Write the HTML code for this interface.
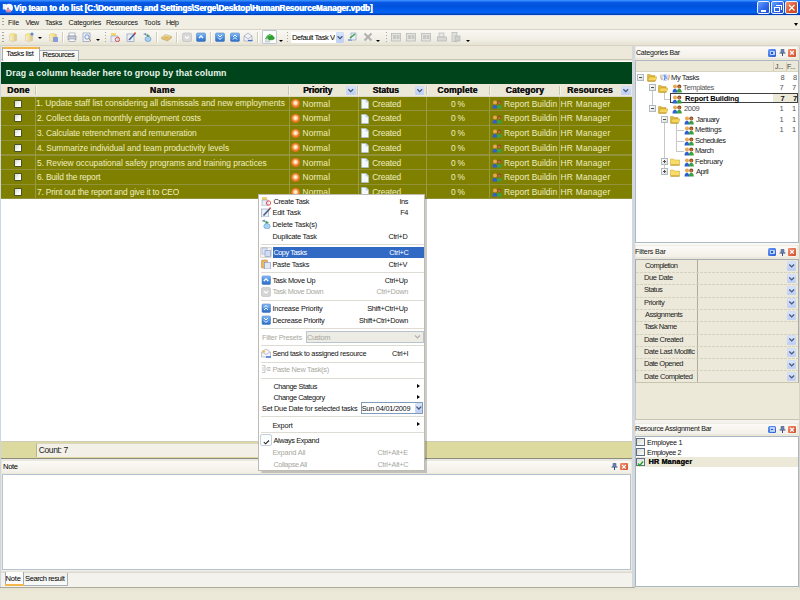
<!DOCTYPE html><html><head><meta charset="utf-8"><style>
*{margin:0;padding:0;box-sizing:border-box}
html,body{width:800px;height:600px;overflow:hidden;background:#ECE9D8;font-family:"Liberation Sans",sans-serif;font-size:8px;color:#000;position:relative}
div{position:absolute}
.nw{white-space:nowrap}
.grip{width:2px;background:repeating-linear-gradient(#A9A696 0 1px,transparent 1px 3px)}
.tsep{width:1px;background:#D0CDBD;box-shadow:1px 0 0 #fff}
.dsep{width:1px;background:repeating-linear-gradient(#A9A696 0 1px,transparent 1px 3px)}
.arr{width:0;height:0;border-left:2px solid transparent;border-right:2px solid transparent;border-top:2px solid #000}
.ddb{background:linear-gradient(#DDE7FB,#B9CCF2);border-radius:1.5px;box-shadow:inset 0 0 0 0.6px #C8D6F4}
.ddb svg{position:absolute;left:0;top:0}
</style></head><body>
<div style="left:0px;top:0px;width:800px;height:15px;background:linear-gradient(#3E96FF 0,#2C80FA 1px,#0858E4 2.5px,#0052DC 6px,#005CEC 10px,#0062F4 12.5px,#0048C4 14px,#0038A0 15px)"></div>
<div style="left:0px;top:15px;width:800px;height:1px;background:#D8E2F4"></div>
<div style="left:1.5px;top:2px;width:12px;height:12px"><svg width="12" height="12" viewBox="0 0 12 12"><rect x="0.8" y="2" width="3.2" height="5.5" fill="#E8F0FF"/><circle cx="7" cy="5.8" r="4" fill="#FCF8FA"/><path d="M3.5 8 Q6.5 6.5 9.5 8.5 L8.5 10.5 L4 10.5 Z" fill="#E07890" opacity="0.8"/><circle cx="6" cy="6.5" r="1" fill="#8888A8"/></svg></div>
<div class="nw" style="left:13.75px;top:2.86px;font-size:8.2px;line-height:11px;font-weight:bold;color:#fff;letter-spacing:-0.096px;text-shadow:0.5px 0 0 #fff;">Vip team to do list [C:\Documents and Settings\Serge\Desktop\HumanResourceManager.vpdb]</div>
<div style="left:757px;top:1px;width:13px;height:13px;border:1px solid #EEF2FF;border-radius:2px;background:linear-gradient(135deg,#6AA0FC,#3068EA 55%,#2050D0)"><div style="left:2.5px;top:7.5px;width:5px;height:2px;background:#fff"></div></div>
<div style="left:771px;top:1px;width:13px;height:13px;border:1px solid #EEF2FF;border-radius:2px;background:linear-gradient(135deg,#6AA0FC,#3068EA 55%,#2050D0)"><div style="left:2px;top:5px;width:6px;height:5px;border:1px solid #fff;border-top-width:1.5px"></div><div style="left:4px;top:2.5px;width:6px;height:5px;border-top:1.5px solid #fff;border-right:1px solid #fff"></div></div>
<div style="left:785px;top:1px;width:13px;height:13px;border:1px solid #EEF2FF;border-radius:2px;background:linear-gradient(135deg,#F49878,#DC5830 55%,#C4421E)"><svg style="position:absolute;left:1px;top:1px" width="9" height="9" viewBox="0 0 9 9"><path d="M2 2 L7.5 7.5 M7.5 2 L2 7.5" stroke="#fff" stroke-width="1.2"/></svg></div>
<div style="left:0px;top:16px;width:800px;height:12.5px;background:#F1EFE4"></div>
<div style="left:0px;top:28.5px;width:800px;height:1px;background:#D8D5C6"></div>
<div class="grip" style="left:2px;top:18px;height:9px"></div>
<div class="nw" style="left:8.00px;top:17.54px;font-size:7.1px;line-height:10px;font-weight:normal;color:#111;letter-spacing:-0.083px;">File</div>
<div class="nw" style="left:25.60px;top:17.54px;font-size:7.1px;line-height:10px;font-weight:normal;color:#111;letter-spacing:-0.533px;">View</div>
<div class="nw" style="left:45.00px;top:17.54px;font-size:7.1px;line-height:10px;font-weight:normal;color:#111;letter-spacing:-0.225px;">Tasks</div>
<div class="nw" style="left:68.50px;top:17.54px;font-size:7.1px;line-height:10px;font-weight:normal;color:#111;letter-spacing:-0.167px;">Categories</div>
<div class="nw" style="left:105.90px;top:17.54px;font-size:7.1px;line-height:10px;font-weight:normal;color:#111;letter-spacing:-0.225px;">Resources</div>
<div class="nw" style="left:144.00px;top:17.54px;font-size:7.1px;line-height:10px;font-weight:normal;color:#111;">Tools</div>
<div class="nw" style="left:165.90px;top:17.54px;font-size:7.1px;line-height:10px;font-weight:normal;color:#111;letter-spacing:-0.500px;">Help</div>
<div class="arr" style="left:793.5px;top:23px;border-width:3px 2.5px 0 2.5px"></div>
<div style="left:0px;top:29.5px;width:800px;height:15px;background:linear-gradient(#F8F7F2,#F1EFE6 60%,#E6E3D3)"></div>
<div style="left:0px;top:44.5px;width:800px;height:2px;background:linear-gradient(#D8D5C8,#CFCCC0)"></div>
<div class="grip" style="left:2px;top:32px;height:11px"></div>
<div style="left:8px;top:32px;width:10px;height:10px"><svg width="10" height="10" viewBox="0 0 10 10"><defs><linearGradient id="cg" x1="0" x2="1"><stop offset="0" stop-color="#F8F0D0"/><stop offset="0.5" stop-color="#F0E0A8"/><stop offset="1" stop-color="#D8C488"/></linearGradient></defs><path d="M1.5 2.5 Q5 0.5 8.5 2.5 L8.5 8.5 Q5 10.5 1.5 8.5 Z" fill="url(#cg)" stroke="#D0C090" stroke-width="0.5"/><ellipse cx="4" cy="2.8" rx="2.2" ry="1.3" fill="#F8E878"/></svg></div>
<div style="left:24px;top:32px;width:10px;height:10px"><svg width="10" height="10" viewBox="0 0 10 10"><defs><linearGradient id="cg" x1="0" x2="1"><stop offset="0" stop-color="#F8F0D0"/><stop offset="0.5" stop-color="#F0E0A8"/><stop offset="1" stop-color="#D8C488"/></linearGradient></defs><path d="M1.5 2.5 Q5 0.5 8.5 2.5 L8.5 8.5 Q5 10.5 1.5 8.5 Z" fill="url(#cg)" stroke="#D0C090" stroke-width="0.5"/><ellipse cx="4" cy="2.8" rx="2.2" ry="1.3" fill="#F8E878"/><circle cx="8" cy="2" r="1.6" fill="#5A8AD0"/></svg></div>
<div class="arr" style="left:38px;top:37px"></div>
<div style="left:48px;top:32px;width:10px;height:10px"><svg width="10" height="10" viewBox="0 0 10 10"><defs><linearGradient id="cg" x1="0" x2="1"><stop offset="0" stop-color="#F8F0D0"/><stop offset="0.5" stop-color="#F0E0A8"/><stop offset="1" stop-color="#D8C488"/></linearGradient></defs><path d="M1.5 2.5 Q5 0.5 8.5 2.5 L8.5 8.5 Q5 10.5 1.5 8.5 Z" fill="url(#cg)" stroke="#D0C090" stroke-width="0.5"/><ellipse cx="4" cy="2.8" rx="2.2" ry="1.3" fill="#F8E878"/><rect x="5" y="5" width="5" height="5" fill="#8A9CDC"/></svg></div>
<div class="tsep" style="left:62px;top:32px;height:11px"></div>
<div style="left:67px;top:32px;width:10px;height:10px"><svg width="10" height="10" viewBox="0 0 10 10"><rect x="2" y="1" width="6" height="3" fill="#fff" stroke="#8890A0" stroke-width="0.6"/><rect x="1" y="4" width="8" height="3.5" fill="#C8CCD8" stroke="#7880A0" stroke-width="0.6"/><rect x="2" y="7" width="6" height="2.5" fill="#fff" stroke="#8890A0" stroke-width="0.6"/></svg></div>
<div style="left:82px;top:32px;width:10px;height:10px"><svg width="10" height="10" viewBox="0 0 10 10"><rect x="1" y="1" width="7" height="8.5" fill="#F0F4FA" stroke="#8898B8" stroke-width="0.7"/><circle cx="5" cy="5" r="2.2" fill="none" stroke="#6080C0" stroke-width="0.8"/><path d="M6.5 6.5 L9 9" stroke="#C08040"/></svg></div>
<div class="arr" style="left:96px;top:39px"></div>
<div class="dsep" style="left:105px;top:32px;height:11px"></div>
<div style="left:110px;top:32px;width:10px;height:10px"><svg width="10" height="10" viewBox="0 0 10 10"><rect x="1" y="1" width="5" height="4" fill="#F4D870"/><rect x="1" y="4" width="7" height="6" fill="#E8ECF4" stroke="#90A0C0" stroke-width="0.6"/><circle cx="7.5" cy="7.5" r="2.2" fill="none" stroke="#E04040" stroke-width="0.9"/></svg></div>
<div style="left:126px;top:32px;width:10px;height:10px"><svg width="10" height="10" viewBox="0 0 10 10"><rect x="1" y="2" width="7" height="7.5" fill="#E8F0FA" stroke="#8090B0" stroke-width="0.6"/><path d="M3 8 L9 1.5" stroke="#506090" stroke-width="1.6"/><circle cx="9" cy="1.3" r="1" fill="#E05030"/></svg></div>
<div style="left:142px;top:32px;width:10px;height:10px"><svg width="10" height="10" viewBox="0 0 10 10"><path d="M1 2 L4 1 L5 4 Z" fill="#6A90C8"/><path d="M5 2 L8 4 L5 6 Z" fill="#40A040"/><ellipse cx="6" cy="7" rx="3" ry="2.6" fill="#A8D0F0" stroke="#6090C0" stroke-width="0.6"/></svg></div>
<div class="tsep" style="left:155.5px;top:32px;height:11px"></div>
<div style="left:160.5px;top:32px;width:11px;height:10px"><svg width="11" height="10" viewBox="0 0 11 10"><path d="M0.5 5.5 L4.5 2.5 L10.5 4.5 L6.5 7.5 Z" fill="#F0DC98" stroke="#B8A060" stroke-width="0.5"/><path d="M0.5 5.5 L0.8 7 L6.5 9 L10.5 6 L10.5 4.5" fill="#E0C070" stroke="#B8A060" stroke-width="0.5"/><path d="M3 4.5 L7 5.5" stroke="#C8A850" stroke-width="0.6"/></svg></div>
<div class="tsep" style="left:176px;top:32px;height:11px"></div>
<div style="left:182px;top:32px;width:10px;height:10px"><svg width="10" height="10" viewBox="0 0 10 10"><rect x="0.5" y="1" width="9" height="8.5" rx="1.5" fill="#D8D8D8" stroke="#B8B8B8" stroke-width="0.6"/><path d="M3 4.5 L5 6.5 L7 4.5" fill="none" stroke="#fff" stroke-width="1.2"/></svg></div>
<div style="left:196px;top:32px;width:10px;height:10px"><svg width="10" height="10" viewBox="0 0 10 10"><rect x="0.5" y="1" width="9" height="8.5" rx="1.3" fill="url(#bg1)" stroke="#3A70B8" stroke-width="0.5"/><path d="M3 6 L5 4 L7 6" fill="none" stroke="#fff" stroke-width="1.3"/></svg></div>
<div class="tsep" style="left:209.5px;top:32px;height:11px"></div>
<div style="left:215px;top:32px;width:10px;height:10px"><svg width="10" height="10" viewBox="0 0 10 10"><rect x="0.5" y="1" width="9" height="8.5" rx="1.3" fill="url(#bg1)" stroke="#3A70B8" stroke-width="0.5"/><path d="M3 3 L5 5 L7 3 M3 5.5 L5 7.5 L7 5.5" fill="none" stroke="#fff" stroke-width="1"/></svg></div>
<div style="left:230px;top:32px;width:10px;height:10px"><svg width="10" height="10" viewBox="0 0 10 10"><rect x="0.5" y="1" width="9" height="8.5" rx="1.3" fill="url(#bg1)" stroke="#3A70B8" stroke-width="0.5"/><path d="M3 5 L5 3 L7 5 M3 7.5 L5 5.5 L7 7.5" fill="none" stroke="#fff" stroke-width="1"/></svg></div>
<div style="left:243px;top:32px;width:10px;height:10px"><svg width="10" height="10" viewBox="0 0 10 10"><path d="M1 4 L5 1 L9 4 L9 9 L1 9 Z" fill="#F0F0F4" stroke="#9098B0" stroke-width="0.6"/><path d="M1 4 L5 7 L9 4" fill="none" stroke="#9098B0" stroke-width="0.6"/><path d="M5 8.5 L9.5 8.5" stroke="#4070D0" stroke-width="1.2"/></svg></div>
<div class="tsep" style="left:257px;top:32px;height:11px"></div>
<div style="left:261.5px;top:30.3px;width:15px;height:14px;background:#FCFCFA;border:1px solid #C0C8D4;border-radius:1px"></div>
<div style="left:263.5px;top:32.5px;width:11px;height:10px"><svg width="11" height="10" viewBox="0 0 11 10"><path d="M1.5 6 Q3 1.5 6 1.5 Q9 2 10.5 5 L9.5 6.5 L5 7 Z" fill="#2EA030" stroke="#208028" stroke-width="0.5"/><path d="M3 3.5 Q5 2 7 2.5" stroke="#60D060" stroke-width="1" fill="none"/><path d="M1 9 L3 4.5 L6 9 Z" fill="#D8E4E8" stroke="#90A8A0" stroke-width="0.4"/></svg></div>
<div class="arr" style="left:279px;top:40px"></div>
<div class="dsep" style="left:287px;top:32px;height:11px"></div>
<div style="left:291px;top:31.5px;width:53px;height:11px;background:#fff"></div>
<div style="left:291px;top:31.5px;width:44px;height:11px;overflow:hidden">
<div class="nw" style="left:1.00px;top:0.57px;font-size:7.6px;line-height:11px;font-weight:normal;color:#000;letter-spacing:-0.442px;">Default Task View</div>
</div>
<div class="ddb" style="left:335.5px;top:31.5px;width:8px;height:11px"><svg width="8" height="11" viewBox="0 0 8 11"><path d="M1.60 4.30 L4.00 6.70 L6.40 4.30" fill="none" stroke="#4A5880" stroke-width="1.3"/></svg></div>
<div style="left:347px;top:32px;width:10px;height:10px"><svg width="10" height="10" viewBox="0 0 10 10"><path d="M1 8 L5 8" stroke="#5080D0" stroke-width="1.2"/><rect x="4" y="1" width="5" height="7" fill="#E8F0F8" stroke="#8098B8" stroke-width="0.6"/><path d="M3 6 L8 2" stroke="#40A040" stroke-width="1.4"/></svg></div>
<div style="left:363px;top:32px;width:10px;height:10px"><svg width="10" height="10" viewBox="0 0 10 10"><path d="M1.5 1.5 L8.5 8.5 M8.5 1.5 L1.5 8.5" stroke="#B0B0B0" stroke-width="2"/></svg></div>
<div class="arr" style="left:376px;top:40px"></div>
<div class="dsep" style="left:386px;top:32px;height:11px"></div>
<div style="left:391px;top:32px;width:10px;height:10px"><svg width="10" height="10" viewBox="0 0 10 10"><rect x="0.5" y="1.5" width="9" height="7.5" fill="#E4E4E0" stroke="#B4B4B0" stroke-width="0.7"/><rect x="2" y="3" width="3" height="4" fill="#C8C8C4"/><rect x="5.5" y="3" width="3" height="4" fill="#C8C8C4"/></svg></div>
<div style="left:406px;top:32px;width:10px;height:10px"><svg width="10" height="10" viewBox="0 0 10 10"><rect x="0.5" y="1.5" width="9" height="7.5" fill="#E4E4E0" stroke="#B4B4B0" stroke-width="0.7"/><rect x="2" y="3" width="3" height="4" fill="#C8C8C4"/><rect x="5.5" y="3" width="3" height="4" fill="#C8C8C4"/></svg></div>
<div style="left:421px;top:32px;width:10px;height:10px"><svg width="10" height="10" viewBox="0 0 10 10"><rect x="0.5" y="1.5" width="9" height="7.5" fill="#E4E4E0" stroke="#B4B4B0" stroke-width="0.7"/><rect x="2" y="3" width="3" height="4" fill="#C8C8C4"/><rect x="5.5" y="3" width="3" height="4" fill="#C8C8C4"/></svg></div>
<div style="left:437px;top:32px;width:10px;height:10px"><svg width="10" height="10" viewBox="0 0 10 10"><rect x="2" y="1" width="5" height="4" fill="#E8E8E4" stroke="#B0B0AC" stroke-width="0.6"/><rect x="0.5" y="5" width="9" height="4" fill="#D8D8D4" stroke="#B0B0AC" stroke-width="0.6"/></svg></div>
<div style="left:451px;top:32px;width:10px;height:10px"><svg width="10" height="10" viewBox="0 0 10 10"><rect x="1" y="0.5" width="5" height="9" fill="#E0E0DC" stroke="#B0B0AC" stroke-width="0.6"/><rect x="4" y="4" width="5" height="5" fill="#D0D0CC" stroke="#B0B0AC" stroke-width="0.6"/></svg></div>
<div class="arr" style="left:466px;top:40px"></div>
<div style="left:0px;top:45.5px;width:632px;height:542px;background:#ECE9D8"></div>
<div style="left:0px;top:45.5px;width:1.3px;height:542px;background:#CDD5DE"></div>
<div style="left:1.3px;top:46.5px;width:630.7px;height:14px;background:#ECE9DA"></div>
<div style="left:1.3px;top:59.3px;width:630.7px;height:1px;background:#C8C5B6"></div>
<div style="left:2px;top:47px;width:37.5px;height:14px;background:#FDFDFB;border:1px solid #A0AAB8;border-bottom:none"></div>
<div style="left:2.5px;top:47px;width:36.5px;height:2px;background:#F3B64C"></div>
<div class="nw" style="left:6.20px;top:47.87px;font-size:7.6px;line-height:11px;font-weight:normal;color:#000;letter-spacing:-0.356px;">Tasks list</div>
<div style="left:39.5px;top:49.5px;width:39px;height:11.5px;background:linear-gradient(#FBFBF8,#EDEBE3);border:1px solid #A8B0BC;border-bottom:none;border-left:none"></div>
<div class="nw" style="left:42.50px;top:48.87px;font-size:7.6px;line-height:11px;font-weight:normal;color:#000;letter-spacing:-0.500px;">Resources</div>
<div style="left:1.3px;top:60.5px;width:630.7px;height:1px;background:#FFFFFF"></div>
<div style="left:632px;top:45.5px;width:2.5px;height:542px;background:#D3D8DD"></div>
<div style="left:1.3px;top:61.5px;width:630.7px;height:22.5px;background:#00441C"></div>
<div class="nw" style="left:5.80px;top:66.95px;font-size:8.8px;line-height:12px;font-weight:bold;color:#EAF4EA;letter-spacing:0.085px;">Drag a column header here to group by that column</div>
<div style="left:1.3px;top:84px;width:630.7px;height:12.5px;background:#EBE8D8"></div>
<div style="left:1.3px;top:95.5px;width:630.7px;height:1px;background:#DCD8C6"></div>
<div class="nw" style="left:7.10px;top:84.02px;font-size:8.6px;line-height:12px;font-weight:bold;color:#111;letter-spacing:0.267px;text-shadow:0.4px 0 0 #111;">Done</div>
<div class="nw" style="left:149.75px;top:84.02px;font-size:8.6px;line-height:12px;font-weight:bold;color:#111;letter-spacing:0.450px;text-shadow:0.4px 0 0 #111;">Name</div>
<div class="nw" style="left:303.00px;top:84.02px;font-size:8.6px;line-height:12px;font-weight:bold;color:#111;letter-spacing:-0.129px;text-shadow:0.4px 0 0 #111;">Priority</div>
<div class="nw" style="left:372.50px;top:84.02px;font-size:8.6px;line-height:12px;font-weight:bold;color:#111;letter-spacing:0.020px;text-shadow:0.4px 0 0 #111;">Status</div>
<div class="nw" style="left:437.20px;top:84.02px;font-size:8.6px;line-height:12px;font-weight:bold;color:#111;letter-spacing:0.143px;text-shadow:0.4px 0 0 #111;">Complete</div>
<div class="nw" style="left:505.60px;top:84.02px;font-size:8.6px;line-height:12px;font-weight:bold;color:#111;letter-spacing:0.143px;text-shadow:0.4px 0 0 #111;">Category</div>
<div class="nw" style="left:567.00px;top:84.02px;font-size:8.6px;line-height:12px;font-weight:bold;color:#111;letter-spacing:0.200px;text-shadow:0.4px 0 0 #111;">Resources</div>
<div style="left:35px;top:85.5px;width:1px;height:9.5px;background:#CBC7B6;box-shadow:1px 0 0 rgba(255,255,255,0.5)"></div>
<div style="left:288px;top:85.5px;width:1px;height:9.5px;background:#CBC7B6;box-shadow:1px 0 0 rgba(255,255,255,0.5)"></div>
<div style="left:357px;top:85.5px;width:1px;height:9.5px;background:#CBC7B6;box-shadow:1px 0 0 rgba(255,255,255,0.5)"></div>
<div style="left:425.5px;top:85.5px;width:1px;height:9.5px;background:#CBC7B6;box-shadow:1px 0 0 rgba(255,255,255,0.5)"></div>
<div style="left:489px;top:85.5px;width:1px;height:9.5px;background:#CBC7B6;box-shadow:1px 0 0 rgba(255,255,255,0.5)"></div>
<div style="left:559px;top:85.5px;width:1px;height:9.5px;background:#CBC7B6;box-shadow:1px 0 0 rgba(255,255,255,0.5)"></div>
<div class="ddb" style="left:346px;top:85.5px;width:9.5px;height:9px"><svg width="9.5" height="9" viewBox="0 0 9.5 9"><path d="M2.35 3.30 L4.75 5.70 L7.15 3.30" fill="none" stroke="#4A5880" stroke-width="1.3"/></svg></div>
<div class="ddb" style="left:414.5px;top:85.5px;width:9.5px;height:9px"><svg width="9.5" height="9" viewBox="0 0 9.5 9"><path d="M2.35 3.30 L4.75 5.70 L7.15 3.30" fill="none" stroke="#4A5880" stroke-width="1.3"/></svg></div>
<div class="ddb" style="left:621px;top:85.5px;width:9.5px;height:9px"><svg width="9.5" height="9" viewBox="0 0 9.5 9"><path d="M2.35 3.30 L4.75 5.70 L7.15 3.30" fill="none" stroke="#4A5880" stroke-width="1.3"/></svg></div>
<div style="left:1.3px;top:96.5px;width:630.7px;height:102.89999999999999px;background:#808000"></div>
<div style="left:1.3px;top:110.10000000000001px;width:630.7px;height:1.4px;background:#92923A"></div>
<div style="left:14px;top:99.7px;width:8px;height:8px;background:linear-gradient(135deg,#D8D8D0,#FCFCFA 70%);border:1px solid #4A5228;border-radius:1px"></div>
<div class="nw" style="left:36.00px;top:96.89px;font-size:8.4px;line-height:12px;font-weight:normal;color:#EEEEC2;letter-spacing:-0.015px;">1. Update staff list considering all dismissals and new employments</div>
<div style="left:291px;top:99.3px;width:9px;height:9px;border-radius:50%;background:radial-gradient(circle at 50% 45%,#FFF8E8 0,#FFE4B8 22%,#F08030 48%,#CC5010 100%)"></div>
<div class="nw" style="left:302.50px;top:97.79px;font-size:8.4px;line-height:12px;font-weight:normal;color:#EEEEC2;letter-spacing:0.100px;">Normal</div>
<div style="left:361px;top:99.0px;width:8px;height:10px"><svg width="8" height="10" viewBox="0 0 8 10"><path d="M0.5 0.5 L5 0.5 L7.5 3 L7.5 9.5 L0.5 9.5 Z" fill="#F4F8FF" stroke="#A8C0E0" stroke-width="0.7"/><path d="M5 0.5 L5 3 L7.5 3" fill="#D0E0F4" stroke="#A8C0E0" stroke-width="0.6"/></svg></div>
<div class="nw" style="left:372.20px;top:97.79px;font-size:8.4px;line-height:12px;font-weight:normal;color:#EEEEC2;letter-spacing:-0.117px;">Created</div>
<div class="nw" style="left:451.00px;top:97.79px;font-size:8.4px;line-height:12px;font-weight:normal;color:#EEEEC2;letter-spacing:-0.250px;">0 %</div>
<div style="left:491.5px;top:99.9px;width:10px;height:9px"><svg width="10" height="9" viewBox="0 0 10 9"><circle cx="3" cy="2.4" r="2" fill="#E8A850"/><circle cx="7.3" cy="2.4" r="2" fill="#8A4A20"/><circle cx="7.3" cy="2.9" r="1.1" fill="#C87840"/><path d="M0.5 8.5 Q0.6 4.8 3 4.8 Q5 4.8 5.2 8.5 Z" fill="#2E5ED0"/><path d="M4.8 8.5 Q4.9 4.8 7.3 4.8 Q9.6 4.8 9.8 8.5 Z" fill="#3AA040"/></svg></div>
<div class="nw" style="left:504.00px;top:97.79px;font-size:8.4px;line-height:12px;font-weight:normal;color:#EEEEC2;letter-spacing:0.038px;">Report Buildin</div>
<div class="nw" style="left:560.50px;top:97.79px;font-size:8.4px;line-height:12px;font-weight:normal;color:#EEEEC2;letter-spacing:0.244px;">HR Manager</div>
<div style="left:1.3px;top:124.80000000000001px;width:630.7px;height:1.4px;background:#92923A"></div>
<div style="left:14px;top:114.4px;width:8px;height:8px;background:linear-gradient(135deg,#D8D8D0,#FCFCFA 70%);border:1px solid #4A5228;border-radius:1px"></div>
<div class="nw" style="left:37.00px;top:112.49px;font-size:8.4px;line-height:12px;font-weight:normal;color:#EEEEC2;letter-spacing:-0.065px;">2. Collect data on monthly employment costs</div>
<div style="left:291px;top:114.0px;width:9px;height:9px;border-radius:50%;background:radial-gradient(circle at 50% 45%,#FFF8E8 0,#FFE4B8 22%,#F08030 48%,#CC5010 100%)"></div>
<div class="nw" style="left:302.50px;top:112.49px;font-size:8.4px;line-height:12px;font-weight:normal;color:#EEEEC2;letter-spacing:0.100px;">Normal</div>
<div style="left:361px;top:113.7px;width:8px;height:10px"><svg width="8" height="10" viewBox="0 0 8 10"><path d="M0.5 0.5 L5 0.5 L7.5 3 L7.5 9.5 L0.5 9.5 Z" fill="#F4F8FF" stroke="#A8C0E0" stroke-width="0.7"/><path d="M5 0.5 L5 3 L7.5 3" fill="#D0E0F4" stroke="#A8C0E0" stroke-width="0.6"/></svg></div>
<div class="nw" style="left:372.20px;top:112.49px;font-size:8.4px;line-height:12px;font-weight:normal;color:#EEEEC2;letter-spacing:-0.117px;">Created</div>
<div class="nw" style="left:451.00px;top:112.49px;font-size:8.4px;line-height:12px;font-weight:normal;color:#EEEEC2;letter-spacing:-0.250px;">0 %</div>
<div style="left:491.5px;top:114.60000000000001px;width:10px;height:9px"><svg width="10" height="9" viewBox="0 0 10 9"><circle cx="3" cy="2.4" r="2" fill="#E8A850"/><circle cx="7.3" cy="2.4" r="2" fill="#8A4A20"/><circle cx="7.3" cy="2.9" r="1.1" fill="#C87840"/><path d="M0.5 8.5 Q0.6 4.8 3 4.8 Q5 4.8 5.2 8.5 Z" fill="#2E5ED0"/><path d="M4.8 8.5 Q4.9 4.8 7.3 4.8 Q9.6 4.8 9.8 8.5 Z" fill="#3AA040"/></svg></div>
<div class="nw" style="left:504.00px;top:112.49px;font-size:8.4px;line-height:12px;font-weight:normal;color:#EEEEC2;letter-spacing:0.038px;">Report Buildin</div>
<div class="nw" style="left:560.50px;top:112.49px;font-size:8.4px;line-height:12px;font-weight:normal;color:#EEEEC2;letter-spacing:0.244px;">HR Manager</div>
<div style="left:1.3px;top:139.5px;width:630.7px;height:1.4px;background:#92923A"></div>
<div style="left:14px;top:129.1px;width:8px;height:8px;background:linear-gradient(135deg,#D8D8D0,#FCFCFA 70%);border:1px solid #4A5228;border-radius:1px"></div>
<div class="nw" style="left:37.00px;top:127.19px;font-size:8.4px;line-height:12px;font-weight:normal;color:#EEEEC2;letter-spacing:-0.104px;">3. Calculate retrenchment and remuneration</div>
<div style="left:291px;top:128.70000000000002px;width:9px;height:9px;border-radius:50%;background:radial-gradient(circle at 50% 45%,#FFF8E8 0,#FFE4B8 22%,#F08030 48%,#CC5010 100%)"></div>
<div class="nw" style="left:302.50px;top:127.19px;font-size:8.4px;line-height:12px;font-weight:normal;color:#EEEEC2;letter-spacing:0.100px;">Normal</div>
<div style="left:361px;top:128.4px;width:8px;height:10px"><svg width="8" height="10" viewBox="0 0 8 10"><path d="M0.5 0.5 L5 0.5 L7.5 3 L7.5 9.5 L0.5 9.5 Z" fill="#F4F8FF" stroke="#A8C0E0" stroke-width="0.7"/><path d="M5 0.5 L5 3 L7.5 3" fill="#D0E0F4" stroke="#A8C0E0" stroke-width="0.6"/></svg></div>
<div class="nw" style="left:372.20px;top:127.19px;font-size:8.4px;line-height:12px;font-weight:normal;color:#EEEEC2;letter-spacing:-0.117px;">Created</div>
<div class="nw" style="left:451.00px;top:127.19px;font-size:8.4px;line-height:12px;font-weight:normal;color:#EEEEC2;letter-spacing:-0.250px;">0 %</div>
<div style="left:491.5px;top:129.3px;width:10px;height:9px"><svg width="10" height="9" viewBox="0 0 10 9"><circle cx="3" cy="2.4" r="2" fill="#E8A850"/><circle cx="7.3" cy="2.4" r="2" fill="#8A4A20"/><circle cx="7.3" cy="2.9" r="1.1" fill="#C87840"/><path d="M0.5 8.5 Q0.6 4.8 3 4.8 Q5 4.8 5.2 8.5 Z" fill="#2E5ED0"/><path d="M4.8 8.5 Q4.9 4.8 7.3 4.8 Q9.6 4.8 9.8 8.5 Z" fill="#3AA040"/></svg></div>
<div class="nw" style="left:504.00px;top:127.19px;font-size:8.4px;line-height:12px;font-weight:normal;color:#EEEEC2;letter-spacing:0.038px;">Report Buildin</div>
<div class="nw" style="left:560.50px;top:127.19px;font-size:8.4px;line-height:12px;font-weight:normal;color:#EEEEC2;letter-spacing:0.244px;">HR Manager</div>
<div style="left:1.3px;top:154.2px;width:630.7px;height:1.4px;background:#92923A"></div>
<div style="left:14px;top:143.79999999999998px;width:8px;height:8px;background:linear-gradient(135deg,#D8D8D0,#FCFCFA 70%);border:1px solid #4A5228;border-radius:1px"></div>
<div class="nw" style="left:37.00px;top:141.89px;font-size:8.4px;line-height:12px;font-weight:normal;color:#EEEEC2;letter-spacing:-0.049px;">4. Summarize individual and team productivity levels</div>
<div style="left:291px;top:143.4px;width:9px;height:9px;border-radius:50%;background:radial-gradient(circle at 50% 45%,#FFF8E8 0,#FFE4B8 22%,#F08030 48%,#CC5010 100%)"></div>
<div class="nw" style="left:302.50px;top:141.89px;font-size:8.4px;line-height:12px;font-weight:normal;color:#EEEEC2;letter-spacing:0.100px;">Normal</div>
<div style="left:361px;top:143.1px;width:8px;height:10px"><svg width="8" height="10" viewBox="0 0 8 10"><path d="M0.5 0.5 L5 0.5 L7.5 3 L7.5 9.5 L0.5 9.5 Z" fill="#F4F8FF" stroke="#A8C0E0" stroke-width="0.7"/><path d="M5 0.5 L5 3 L7.5 3" fill="#D0E0F4" stroke="#A8C0E0" stroke-width="0.6"/></svg></div>
<div class="nw" style="left:372.20px;top:141.89px;font-size:8.4px;line-height:12px;font-weight:normal;color:#EEEEC2;letter-spacing:-0.117px;">Created</div>
<div class="nw" style="left:451.00px;top:141.89px;font-size:8.4px;line-height:12px;font-weight:normal;color:#EEEEC2;letter-spacing:-0.250px;">0 %</div>
<div style="left:491.5px;top:144.0px;width:10px;height:9px"><svg width="10" height="9" viewBox="0 0 10 9"><circle cx="3" cy="2.4" r="2" fill="#E8A850"/><circle cx="7.3" cy="2.4" r="2" fill="#8A4A20"/><circle cx="7.3" cy="2.9" r="1.1" fill="#C87840"/><path d="M0.5 8.5 Q0.6 4.8 3 4.8 Q5 4.8 5.2 8.5 Z" fill="#2E5ED0"/><path d="M4.8 8.5 Q4.9 4.8 7.3 4.8 Q9.6 4.8 9.8 8.5 Z" fill="#3AA040"/></svg></div>
<div class="nw" style="left:504.00px;top:141.89px;font-size:8.4px;line-height:12px;font-weight:normal;color:#EEEEC2;letter-spacing:0.038px;">Report Buildin</div>
<div class="nw" style="left:560.50px;top:141.89px;font-size:8.4px;line-height:12px;font-weight:normal;color:#EEEEC2;letter-spacing:0.244px;">HR Manager</div>
<div style="left:1.3px;top:168.9px;width:630.7px;height:1.4px;background:#92923A"></div>
<div style="left:14px;top:158.5px;width:8px;height:8px;background:linear-gradient(135deg,#D8D8D0,#FCFCFA 70%);border:1px solid #4A5228;border-radius:1px"></div>
<div class="nw" style="left:37.00px;top:156.59px;font-size:8.4px;line-height:12px;font-weight:normal;color:#EEEEC2;letter-spacing:-0.013px;">5. Review occupational safety programs and training practices</div>
<div style="left:291px;top:158.10000000000002px;width:9px;height:9px;border-radius:50%;background:radial-gradient(circle at 50% 45%,#FFF8E8 0,#FFE4B8 22%,#F08030 48%,#CC5010 100%)"></div>
<div class="nw" style="left:302.50px;top:156.59px;font-size:8.4px;line-height:12px;font-weight:normal;color:#EEEEC2;letter-spacing:0.100px;">Normal</div>
<div style="left:361px;top:157.8px;width:8px;height:10px"><svg width="8" height="10" viewBox="0 0 8 10"><path d="M0.5 0.5 L5 0.5 L7.5 3 L7.5 9.5 L0.5 9.5 Z" fill="#F4F8FF" stroke="#A8C0E0" stroke-width="0.7"/><path d="M5 0.5 L5 3 L7.5 3" fill="#D0E0F4" stroke="#A8C0E0" stroke-width="0.6"/></svg></div>
<div class="nw" style="left:372.20px;top:156.59px;font-size:8.4px;line-height:12px;font-weight:normal;color:#EEEEC2;letter-spacing:-0.117px;">Created</div>
<div class="nw" style="left:451.00px;top:156.59px;font-size:8.4px;line-height:12px;font-weight:normal;color:#EEEEC2;letter-spacing:-0.250px;">0 %</div>
<div style="left:491.5px;top:158.70000000000002px;width:10px;height:9px"><svg width="10" height="9" viewBox="0 0 10 9"><circle cx="3" cy="2.4" r="2" fill="#E8A850"/><circle cx="7.3" cy="2.4" r="2" fill="#8A4A20"/><circle cx="7.3" cy="2.9" r="1.1" fill="#C87840"/><path d="M0.5 8.5 Q0.6 4.8 3 4.8 Q5 4.8 5.2 8.5 Z" fill="#2E5ED0"/><path d="M4.8 8.5 Q4.9 4.8 7.3 4.8 Q9.6 4.8 9.8 8.5 Z" fill="#3AA040"/></svg></div>
<div class="nw" style="left:504.00px;top:156.59px;font-size:8.4px;line-height:12px;font-weight:normal;color:#EEEEC2;letter-spacing:0.038px;">Report Buildin</div>
<div class="nw" style="left:560.50px;top:156.59px;font-size:8.4px;line-height:12px;font-weight:normal;color:#EEEEC2;letter-spacing:0.244px;">HR Manager</div>
<div style="left:1.3px;top:183.6px;width:630.7px;height:1.4px;background:#92923A"></div>
<div style="left:14px;top:173.2px;width:8px;height:8px;background:linear-gradient(135deg,#D8D8D0,#FCFCFA 70%);border:1px solid #4A5228;border-radius:1px"></div>
<div class="nw" style="left:37.00px;top:171.29px;font-size:8.4px;line-height:12px;font-weight:normal;color:#EEEEC2;letter-spacing:-0.139px;">6. Build the report</div>
<div style="left:291px;top:172.8px;width:9px;height:9px;border-radius:50%;background:radial-gradient(circle at 50% 45%,#FFF8E8 0,#FFE4B8 22%,#F08030 48%,#CC5010 100%)"></div>
<div class="nw" style="left:302.50px;top:171.29px;font-size:8.4px;line-height:12px;font-weight:normal;color:#EEEEC2;letter-spacing:0.100px;">Normal</div>
<div style="left:361px;top:172.5px;width:8px;height:10px"><svg width="8" height="10" viewBox="0 0 8 10"><path d="M0.5 0.5 L5 0.5 L7.5 3 L7.5 9.5 L0.5 9.5 Z" fill="#F4F8FF" stroke="#A8C0E0" stroke-width="0.7"/><path d="M5 0.5 L5 3 L7.5 3" fill="#D0E0F4" stroke="#A8C0E0" stroke-width="0.6"/></svg></div>
<div class="nw" style="left:372.20px;top:171.29px;font-size:8.4px;line-height:12px;font-weight:normal;color:#EEEEC2;letter-spacing:-0.117px;">Created</div>
<div class="nw" style="left:451.00px;top:171.29px;font-size:8.4px;line-height:12px;font-weight:normal;color:#EEEEC2;letter-spacing:-0.250px;">0 %</div>
<div style="left:491.5px;top:173.4px;width:10px;height:9px"><svg width="10" height="9" viewBox="0 0 10 9"><circle cx="3" cy="2.4" r="2" fill="#E8A850"/><circle cx="7.3" cy="2.4" r="2" fill="#8A4A20"/><circle cx="7.3" cy="2.9" r="1.1" fill="#C87840"/><path d="M0.5 8.5 Q0.6 4.8 3 4.8 Q5 4.8 5.2 8.5 Z" fill="#2E5ED0"/><path d="M4.8 8.5 Q4.9 4.8 7.3 4.8 Q9.6 4.8 9.8 8.5 Z" fill="#3AA040"/></svg></div>
<div class="nw" style="left:504.00px;top:171.29px;font-size:8.4px;line-height:12px;font-weight:normal;color:#EEEEC2;letter-spacing:0.038px;">Report Buildin</div>
<div class="nw" style="left:560.50px;top:171.29px;font-size:8.4px;line-height:12px;font-weight:normal;color:#EEEEC2;letter-spacing:0.244px;">HR Manager</div>
<div style="left:1.3px;top:198.29999999999998px;width:630.7px;height:1.4px;background:#92923A"></div>
<div style="left:14px;top:187.89999999999998px;width:8px;height:8px;background:linear-gradient(135deg,#D8D8D0,#FCFCFA 70%);border:1px solid #4A5228;border-radius:1px"></div>
<div class="nw" style="left:37.00px;top:185.99px;font-size:8.4px;line-height:12px;font-weight:normal;color:#EEEEC2;letter-spacing:-0.165px;">7. Print out the report and give it to CEO</div>
<div style="left:291px;top:187.5px;width:9px;height:9px;border-radius:50%;background:radial-gradient(circle at 50% 45%,#FFF8E8 0,#FFE4B8 22%,#F08030 48%,#CC5010 100%)"></div>
<div class="nw" style="left:302.50px;top:185.99px;font-size:8.4px;line-height:12px;font-weight:normal;color:#EEEEC2;letter-spacing:0.100px;">Normal</div>
<div style="left:361px;top:187.2px;width:8px;height:10px"><svg width="8" height="10" viewBox="0 0 8 10"><path d="M0.5 0.5 L5 0.5 L7.5 3 L7.5 9.5 L0.5 9.5 Z" fill="#F4F8FF" stroke="#A8C0E0" stroke-width="0.7"/><path d="M5 0.5 L5 3 L7.5 3" fill="#D0E0F4" stroke="#A8C0E0" stroke-width="0.6"/></svg></div>
<div class="nw" style="left:372.20px;top:185.99px;font-size:8.4px;line-height:12px;font-weight:normal;color:#EEEEC2;letter-spacing:-0.117px;">Created</div>
<div class="nw" style="left:451.00px;top:185.99px;font-size:8.4px;line-height:12px;font-weight:normal;color:#EEEEC2;letter-spacing:-0.250px;">0 %</div>
<div style="left:491.5px;top:188.1px;width:10px;height:9px"><svg width="10" height="9" viewBox="0 0 10 9"><circle cx="3" cy="2.4" r="2" fill="#E8A850"/><circle cx="7.3" cy="2.4" r="2" fill="#8A4A20"/><circle cx="7.3" cy="2.9" r="1.1" fill="#C87840"/><path d="M0.5 8.5 Q0.6 4.8 3 4.8 Q5 4.8 5.2 8.5 Z" fill="#2E5ED0"/><path d="M4.8 8.5 Q4.9 4.8 7.3 4.8 Q9.6 4.8 9.8 8.5 Z" fill="#3AA040"/></svg></div>
<div class="nw" style="left:504.00px;top:185.99px;font-size:8.4px;line-height:12px;font-weight:normal;color:#EEEEC2;letter-spacing:0.038px;">Report Buildin</div>
<div class="nw" style="left:560.50px;top:185.99px;font-size:8.4px;line-height:12px;font-weight:normal;color:#EEEEC2;letter-spacing:0.244px;">HR Manager</div>
<div style="left:35px;top:96.5px;width:1.2px;height:102.89999999999999px;background:#9A9A44"></div>
<div style="left:288.5px;top:96.5px;width:1.2px;height:102.89999999999999px;background:#9A9A44"></div>
<div style="left:357.5px;top:96.5px;width:1.2px;height:102.89999999999999px;background:#9A9A44"></div>
<div style="left:425.5px;top:96.5px;width:1.2px;height:102.89999999999999px;background:#9A9A44"></div>
<div style="left:489px;top:96.5px;width:1.2px;height:102.89999999999999px;background:#9A9A44"></div>
<div style="left:559px;top:96.5px;width:1.2px;height:102.89999999999999px;background:#9A9A44"></div>
<div style="left:1.3px;top:199.4px;width:630.7px;height:243.1px;background:#FFFFFF"></div>
<div style="left:1.3px;top:441px;width:630.7px;height:1px;background:#CFCCB8"></div>
<div style="left:1.3px;top:442px;width:630.7px;height:16px;background:#DCDA9E"></div>
<div style="left:36px;top:443.2px;width:252px;height:13.8px;background:#F2F0E7;border-left:1px solid #B8B490;border-top:1px solid #D8D6C0"></div>
<div class="nw" style="left:38.80px;top:444.25px;font-size:8.5px;line-height:12px;font-weight:normal;color:#222;letter-spacing:-0.400px;">Count: 7</div>
<div style="left:1.3px;top:457.6px;width:630.7px;height:1px;background:#8F8D7A"></div>
<div style="left:1.3px;top:458.6px;width:630.7px;height:1.6px;background:#E4E8EC"></div>
<div style="left:2px;top:460.5px;width:629px;height:12.5px;background:linear-gradient(#FBFAF6,#F1EFE6);border-radius:2px"></div>
<div class="nw" style="left:3.00px;top:460.67px;font-size:7.6px;line-height:11px;font-weight:normal;color:#000;letter-spacing:-0.333px;">Note</div>
<div style="left:610.5px;top:463px;width:7px;height:7px"><svg width="7" height="7" viewBox="0 0 7 7"><path d="M1.8 0.8 L5.2 0.8 M2.3 0.8 L2.3 3.6 M4.7 0.8 L4.7 3.6 M0.6 4 L6.4 4" stroke="#3C4C7C" stroke-width="1.1" fill="none"/><rect x="2.3" y="0.8" width="2.4" height="3" fill="#6C80B8"/><path d="M3.5 4 L3.5 7" stroke="#3C4C7C" stroke-width="1"/></svg></div>
<div style="left:620px;top:462.8px;width:8px;height:7.5px;background:linear-gradient(135deg,#F49070,#D04C28);border-radius:1px"><svg style="position:absolute;left:0;top:0" width="8" height="8" viewBox="0 0 8 8"><path d="M2.2 2 L5.8 5.6 M5.8 2 L2.2 5.6" stroke="#fff" stroke-width="1.3"/></svg></div>
<div style="left:2px;top:473.5px;width:629px;height:96.5px;background:#fff;border:1px solid #B4C2D2"></div>
<div style="left:1.3px;top:570px;width:630.7px;height:2.5px;background:linear-gradient(#F4F3EE,#D8D5C8)"></div>
<div style="left:1.3px;top:572.5px;width:630.7px;height:14.5px;background:#F3F2EC"></div>
<div style="left:4.5px;top:572px;width:19.5px;height:13.5px;background:#FDFDFB;border:1px solid #A0AAB8;border-top:none"></div>
<div style="left:5px;top:583.5px;width:18.5px;height:2px;background:#F3B64C"></div>
<div class="nw" style="left:5.50px;top:573.37px;font-size:7.6px;line-height:11px;font-weight:normal;color:#000;letter-spacing:-0.167px;">Note</div>
<div style="left:24px;top:572.5px;width:43.5px;height:13px;background:linear-gradient(#F0EFEA,#FAFAF8);border:1px solid #A8B0BC;border-top:none;border-left:none"></div>
<div class="nw" style="left:25.00px;top:573.37px;font-size:7.6px;line-height:11px;font-weight:normal;color:#000;letter-spacing:-0.417px;">Search result</div>
<div style="left:0px;top:587.2px;width:800px;height:1.2px;background:#ABA99A"></div>
<div style="left:0px;top:588px;width:800px;height:12px;background:linear-gradient(#E6E3D2,#ECE9D8 40%)"></div>
<div style="left:634.5px;top:45.5px;width:165.5px;height:542px;background:#ECE9D8"></div>
<div style="left:798.5px;top:45.5px;width:1.5px;height:542px;background:#D8D5C8"></div>
<div style="left:634.5px;top:46.2px;width:163.5px;height:12.5px;background:linear-gradient(#FCFBF8,#F1EFE6);border-radius:2px;box-shadow:inset 0 0 0 0.5px #E0DED4"></div>
<div class="nw" style="left:636.00px;top:47.94px;font-size:7.1px;line-height:10px;font-weight:normal;color:#111;letter-spacing:-0.250px;">Categories Bar</div>
<div style="left:768px;top:49.2px;width:8px;height:7.5px;background:linear-gradient(135deg,#6A9CF8,#2458D0);border-radius:1.5px"><div style="left:1.5px;top:1.5px;width:5px;height:4.5px;background:#B8D0FA;border-radius:0.5px"><div style="left:1.2px;top:1.6px;width:2.6px;height:1.5px;background:#2858C0"></div></div></div>
<div style="left:778.8px;top:49.400000000000006px;width:7px;height:7px"><svg width="7" height="7" viewBox="0 0 7 7"><path d="M1.8 0.8 L5.2 0.8 M2.3 0.8 L2.3 3.6 M4.7 0.8 L4.7 3.6 M0.6 4 L6.4 4" stroke="#3C4C7C" stroke-width="1.1" fill="none"/><rect x="2.3" y="0.8" width="2.4" height="3" fill="#6C80B8"/><path d="M3.5 4 L3.5 7" stroke="#3C4C7C" stroke-width="1"/></svg></div>
<div style="left:788px;top:49.2px;width:8px;height:7.5px;background:linear-gradient(135deg,#F49070,#D04C28);border-radius:1px"><svg style="position:absolute;left:0;top:0" width="8" height="8" viewBox="0 0 8 8"><path d="M2.2 2 L5.8 5.6 M5.8 2 L2.2 5.6" stroke="#fff" stroke-width="1.3"/></svg></div>
<div style="left:634.5px;top:59.5px;width:164px;height:183.5px;background:#fff;border:1px solid #AEB8C4"></div>
<div style="left:635.5px;top:60.5px;width:162px;height:11px;background:#EBE8D8;border-bottom:1px solid #D8D4C0"></div>
<div style="left:773px;top:62px;width:1px;height:9px;background:#D0CDBE"></div>
<div style="left:786px;top:62px;width:1px;height:9px;background:#D0CDBE"></div>
<div class="nw" style="left:775.00px;top:61.57px;font-size:7px;line-height:10px;font-weight:normal;color:#404040;letter-spacing:-0.300px;">J...</div>
<div class="nw" style="left:787.00px;top:61.57px;font-size:7px;line-height:10px;font-weight:normal;color:#404040;letter-spacing:-0.267px;">F...</div>
<div style="left:652px;top:91px;width:1px;height:15px;background:#C8C8C8"></div>
<div style="left:664px;top:92px;width:1px;height:6.5px;background:#C8C8C8"></div>
<div style="left:664px;top:98.5px;width:6px;height:1px;background:#C8C8C8"></div>
<div style="left:664px;top:123px;width:1px;height:48px;background:#C8C8C8"></div>
<div style="left:676px;top:122px;width:1px;height:29px;background:#C8C8C8"></div>
<div style="left:676px;top:130px;width:8px;height:1px;background:#C8C8C8"></div>
<div style="left:676px;top:140.5px;width:8px;height:1px;background:#C8C8C8"></div>
<div style="left:676px;top:151px;width:8px;height:1px;background:#C8C8C8"></div>
<div style="left:670.2px;top:93.2px;width:127.8px;height:10px;border:1px solid #404040;background:#fff"></div>
<div style="left:773px;top:94.2px;width:24px;height:8px;background:#ECE9D8"></div>
<div style="left:637px;top:74px;width:7px;height:7px;border:1px solid #B0B8C0;background:linear-gradient(135deg,#fff,#DCDCD4)"><div style="left:1px;top:2px;width:3px;height:1px;background:#505050"></div></div>
<div style="left:647px;top:73.25px;width:10px;height:9px"><svg width="10" height="9" viewBox="0 0 10 9"><path d="M0.5 1.5 L3.2 1.5 L4 2.5 L8 2.5 L8 4 L2.5 4 L0.5 8 Z" fill="#E0B840" stroke="#C09828" stroke-width="0.5"/><path d="M2.5 4 L10 4 L8.3 8.3 L0.5 8.3 Z" fill="#F6D65A" stroke="#C8A030" stroke-width="0.5"/><path d="M1 8 L8.3 8" stroke="#B08820" stroke-width="0.8"/></svg></div>
<div style="left:659.8px;top:73.45px;width:10px;height:9px"><svg width="10" height="9" viewBox="0 0 10 9"><path d="M1.2 1.5 Q0 4.5 2.2 7.2 M8.8 1.5 Q10 4.5 7.8 7.2" stroke="#E0A888" stroke-width="1.2" fill="none"/><ellipse cx="5" cy="4.5" rx="3" ry="3.2" fill="#E8F0FC" stroke="#90B0E0" stroke-width="0.5"/><path d="M4 2 Q5.5 4 4.5 7 M5.5 2.5 Q6.5 4 6 6" stroke="#4C80D8" stroke-width="1" fill="none"/></svg></div>
<div class="nw" style="left:671.00px;top:72.65px;font-size:7.5px;line-height:10px;font-weight:normal;color:#222;letter-spacing:-0.357px;">My Tasks</div>
<div class="nw" style="left:780.50px;top:72.65px;font-size:7.5px;line-height:10px;font-weight:normal;color:#555;">8</div>
<div class="nw" style="left:793.00px;top:72.65px;font-size:7.5px;line-height:10px;font-weight:normal;color:#555;">8</div>
<div style="left:649px;top:84px;width:7px;height:7px;border:1px solid #B0B8C0;background:linear-gradient(135deg,#fff,#DCDCD4)"><div style="left:1px;top:2px;width:3px;height:1px;background:#505050"></div></div>
<div style="left:658px;top:83.75px;width:10px;height:9px"><svg width="10" height="9" viewBox="0 0 10 9"><path d="M0.5 1.5 L3.2 1.5 L4 2.5 L8 2.5 L8 4 L2.5 4 L0.5 8 Z" fill="#E0B840" stroke="#C09828" stroke-width="0.5"/><path d="M2.5 4 L10 4 L8.3 8.3 L0.5 8.3 Z" fill="#F6D65A" stroke="#C8A030" stroke-width="0.5"/><path d="M1 8 L8.3 8" stroke="#B08820" stroke-width="0.8"/></svg></div>
<div style="left:671.9px;top:84.05px;width:10px;height:9px"><svg width="10" height="9" viewBox="0 0 10 9"><circle cx="3" cy="2.4" r="2" fill="#E8A850"/><circle cx="7.3" cy="2.4" r="2" fill="#8A4A20"/><circle cx="7.3" cy="2.9" r="1.1" fill="#C87840"/><path d="M0.5 8.5 Q0.6 4.8 3 4.8 Q5 4.8 5.2 8.5 Z" fill="#2E5ED0"/><path d="M4.8 8.5 Q4.9 4.8 7.3 4.8 Q9.6 4.8 9.8 8.5 Z" fill="#3AA040"/></svg></div>
<div class="nw" style="left:683.10px;top:83.15px;font-size:7.5px;line-height:10px;font-weight:normal;color:#585858;letter-spacing:-0.375px;">Templates</div>
<div class="nw" style="left:779.50px;top:83.15px;font-size:7.5px;line-height:10px;font-weight:normal;color:#555;">7</div>
<div class="nw" style="left:792.00px;top:83.15px;font-size:7.5px;line-height:10px;font-weight:normal;color:#555;">7</div>
<div style="left:672.3px;top:94.55px;width:10px;height:9px"><svg width="10" height="9" viewBox="0 0 10 9"><circle cx="3" cy="2.4" r="2" fill="#E8A850"/><circle cx="7.3" cy="2.4" r="2" fill="#8A4A20"/><circle cx="7.3" cy="2.9" r="1.1" fill="#C87840"/><path d="M0.5 8.5 Q0.6 4.8 3 4.8 Q5 4.8 5.2 8.5 Z" fill="#2E5ED0"/><path d="M4.8 8.5 Q4.9 4.8 7.3 4.8 Q9.6 4.8 9.8 8.5 Z" fill="#3AA040"/></svg></div>
<div class="nw" style="left:685.00px;top:93.65px;font-size:7.5px;line-height:10px;font-weight:bold;color:#000;letter-spacing:-0.157px;">Report Building</div>
<div class="nw" style="left:780.50px;top:93.65px;font-size:7.5px;line-height:10px;font-weight:bold;color:#111;">7</div>
<div class="nw" style="left:793.00px;top:93.65px;font-size:7.5px;line-height:10px;font-weight:bold;color:#111;">7</div>
<div style="left:649px;top:105px;width:7px;height:7px;border:1px solid #B0B8C0;background:linear-gradient(135deg,#fff,#DCDCD4)"><div style="left:1px;top:2px;width:3px;height:1px;background:#505050"></div></div>
<div style="left:658px;top:104.75px;width:10px;height:9px"><svg width="10" height="9" viewBox="0 0 10 9"><path d="M0.5 1.5 L3.2 1.5 L4 2.5 L8 2.5 L8 4 L2.5 4 L0.5 8 Z" fill="#E0B840" stroke="#C09828" stroke-width="0.5"/><path d="M2.5 4 L10 4 L8.3 8.3 L0.5 8.3 Z" fill="#F6D65A" stroke="#C8A030" stroke-width="0.5"/><path d="M1 8 L8.3 8" stroke="#B08820" stroke-width="0.8"/></svg></div>
<div style="left:671.9px;top:105.05px;width:10px;height:9px"><svg width="10" height="9" viewBox="0 0 10 9"><circle cx="3" cy="2.4" r="2" fill="#E8A850"/><circle cx="7.3" cy="2.4" r="2" fill="#8A4A20"/><circle cx="7.3" cy="2.9" r="1.1" fill="#C87840"/><path d="M0.5 8.5 Q0.6 4.8 3 4.8 Q5 4.8 5.2 8.5 Z" fill="#2E5ED0"/><path d="M4.8 8.5 Q4.9 4.8 7.3 4.8 Q9.6 4.8 9.8 8.5 Z" fill="#3AA040"/></svg></div>
<div class="nw" style="left:684.10px;top:104.15px;font-size:7.5px;line-height:10px;font-weight:normal;color:#4A4A4A;letter-spacing:-0.400px;">2009</div>
<div class="nw" style="left:779.50px;top:104.15px;font-size:7.5px;line-height:10px;font-weight:normal;color:#555;">1</div>
<div class="nw" style="left:792.00px;top:104.15px;font-size:7.5px;line-height:10px;font-weight:normal;color:#555;">1</div>
<div style="left:661px;top:116px;width:7px;height:7px;border:1px solid #B0B8C0;background:linear-gradient(135deg,#fff,#DCDCD4)"><div style="left:1px;top:2px;width:3px;height:1px;background:#505050"></div></div>
<div style="left:670px;top:115.25px;width:10px;height:9px"><svg width="10" height="9" viewBox="0 0 10 9"><path d="M0.5 1.5 L3.2 1.5 L4 2.5 L8 2.5 L8 4 L2.5 4 L0.5 8 Z" fill="#E0B840" stroke="#C09828" stroke-width="0.5"/><path d="M2.5 4 L10 4 L8.3 8.3 L0.5 8.3 Z" fill="#F6D65A" stroke="#C8A030" stroke-width="0.5"/><path d="M1 8 L8.3 8" stroke="#B08820" stroke-width="0.8"/></svg></div>
<div style="left:683.8px;top:115.55px;width:10px;height:9px"><svg width="10" height="9" viewBox="0 0 10 9"><circle cx="3" cy="2.4" r="2" fill="#E8A850"/><circle cx="7.3" cy="2.4" r="2" fill="#8A4A20"/><circle cx="7.3" cy="2.9" r="1.1" fill="#C87840"/><path d="M0.5 8.5 Q0.6 4.8 3 4.8 Q5 4.8 5.2 8.5 Z" fill="#2E5ED0"/><path d="M4.8 8.5 Q4.9 4.8 7.3 4.8 Q9.6 4.8 9.8 8.5 Z" fill="#3AA040"/></svg></div>
<div class="nw" style="left:696.00px;top:114.65px;font-size:7.5px;line-height:10px;font-weight:normal;color:#222;letter-spacing:-0.517px;">January</div>
<div class="nw" style="left:779.50px;top:114.65px;font-size:7.5px;line-height:10px;font-weight:normal;color:#555;">1</div>
<div class="nw" style="left:792.00px;top:114.65px;font-size:7.5px;line-height:10px;font-weight:normal;color:#555;">1</div>
<div style="left:683.8px;top:126.05px;width:10px;height:9px"><svg width="10" height="9" viewBox="0 0 10 9"><circle cx="3" cy="2.4" r="2" fill="#E8A850"/><circle cx="7.3" cy="2.4" r="2" fill="#8A4A20"/><circle cx="7.3" cy="2.9" r="1.1" fill="#C87840"/><path d="M0.5 8.5 Q0.6 4.8 3 4.8 Q5 4.8 5.2 8.5 Z" fill="#2E5ED0"/><path d="M4.8 8.5 Q4.9 4.8 7.3 4.8 Q9.6 4.8 9.8 8.5 Z" fill="#3AA040"/></svg></div>
<div class="nw" style="left:695.00px;top:125.15px;font-size:7.5px;line-height:10px;font-weight:normal;color:#222;letter-spacing:-0.243px;">Mettings</div>
<div class="nw" style="left:779.50px;top:125.15px;font-size:7.5px;line-height:10px;font-weight:normal;color:#555;">1</div>
<div class="nw" style="left:792.00px;top:125.15px;font-size:7.5px;line-height:10px;font-weight:normal;color:#555;">1</div>
<div style="left:683.8px;top:136.55px;width:10px;height:9px"><svg width="10" height="9" viewBox="0 0 10 9"><circle cx="3" cy="2.4" r="2" fill="#E8A850"/><circle cx="7.3" cy="2.4" r="2" fill="#8A4A20"/><circle cx="7.3" cy="2.9" r="1.1" fill="#C87840"/><path d="M0.5 8.5 Q0.6 4.8 3 4.8 Q5 4.8 5.2 8.5 Z" fill="#2E5ED0"/><path d="M4.8 8.5 Q4.9 4.8 7.3 4.8 Q9.6 4.8 9.8 8.5 Z" fill="#3AA040"/></svg></div>
<div class="nw" style="left:695.00px;top:135.65px;font-size:7.5px;line-height:10px;font-weight:normal;color:#222;letter-spacing:-0.513px;">Schedules</div>
<div style="left:683.8px;top:147.05px;width:10px;height:9px"><svg width="10" height="9" viewBox="0 0 10 9"><circle cx="3" cy="2.4" r="2" fill="#E8A850"/><circle cx="7.3" cy="2.4" r="2" fill="#8A4A20"/><circle cx="7.3" cy="2.9" r="1.1" fill="#C87840"/><path d="M0.5 8.5 Q0.6 4.8 3 4.8 Q5 4.8 5.2 8.5 Z" fill="#2E5ED0"/><path d="M4.8 8.5 Q4.9 4.8 7.3 4.8 Q9.6 4.8 9.8 8.5 Z" fill="#3AA040"/></svg></div>
<div class="nw" style="left:695.00px;top:146.15px;font-size:7.5px;line-height:10px;font-weight:normal;color:#222;letter-spacing:-0.475px;">March</div>
<div style="left:661px;top:158px;width:7px;height:7px;border:1px solid #B0B8C0;background:linear-gradient(135deg,#fff,#DCDCD4)"><div style="left:1px;top:2px;width:3px;height:1px;background:#505050"></div><div style="left:2px;top:1px;width:1px;height:3px;background:#505050"></div></div>
<div style="left:670px;top:157.25px;width:10px;height:9px"><svg width="10" height="9" viewBox="0 0 10 9"><path d="M0.5 2 L3.5 2 L4.5 3 L9.5 3 L9.5 8.3 L0.5 8.3 Z" fill="#F8DC68" stroke="#C8A030" stroke-width="0.5"/><path d="M0.8 8 L9.3 8" stroke="#B08820" stroke-width="0.8"/></svg></div>
<div style="left:683.8px;top:157.55px;width:10px;height:9px"><svg width="10" height="9" viewBox="0 0 10 9"><circle cx="3" cy="2.4" r="2" fill="#E8A850"/><circle cx="7.3" cy="2.4" r="2" fill="#8A4A20"/><circle cx="7.3" cy="2.9" r="1.1" fill="#C87840"/><path d="M0.5 8.5 Q0.6 4.8 3 4.8 Q5 4.8 5.2 8.5 Z" fill="#2E5ED0"/><path d="M4.8 8.5 Q4.9 4.8 7.3 4.8 Q9.6 4.8 9.8 8.5 Z" fill="#3AA040"/></svg></div>
<div class="nw" style="left:695.00px;top:156.65px;font-size:7.5px;line-height:10px;font-weight:normal;color:#222;letter-spacing:-0.286px;">February</div>
<div style="left:661px;top:168px;width:7px;height:7px;border:1px solid #B0B8C0;background:linear-gradient(135deg,#fff,#DCDCD4)"><div style="left:1px;top:2px;width:3px;height:1px;background:#505050"></div><div style="left:2px;top:1px;width:1px;height:3px;background:#505050"></div></div>
<div style="left:670px;top:167.75px;width:10px;height:9px"><svg width="10" height="9" viewBox="0 0 10 9"><path d="M0.5 2 L3.5 2 L4.5 3 L9.5 3 L9.5 8.3 L0.5 8.3 Z" fill="#F8DC68" stroke="#C8A030" stroke-width="0.5"/><path d="M0.8 8 L9.3 8" stroke="#B08820" stroke-width="0.8"/></svg></div>
<div style="left:683.8px;top:168.05px;width:10px;height:9px"><svg width="10" height="9" viewBox="0 0 10 9"><circle cx="3" cy="2.4" r="2" fill="#E8A850"/><circle cx="7.3" cy="2.4" r="2" fill="#8A4A20"/><circle cx="7.3" cy="2.9" r="1.1" fill="#C87840"/><path d="M0.5 8.5 Q0.6 4.8 3 4.8 Q5 4.8 5.2 8.5 Z" fill="#2E5ED0"/><path d="M4.8 8.5 Q4.9 4.8 7.3 4.8 Q9.6 4.8 9.8 8.5 Z" fill="#3AA040"/></svg></div>
<div class="nw" style="left:696.00px;top:167.15px;font-size:7.5px;line-height:10px;font-weight:normal;color:#222;letter-spacing:-0.575px;">April</div>
<div style="left:634.5px;top:243px;width:164px;height:1.5px;background:#F8F8F4"></div>
<div style="left:634.5px;top:245.3px;width:163.5px;height:12.5px;background:linear-gradient(#FCFBF8,#F1EFE6);border-radius:2px;box-shadow:inset 0 0 0 0.5px #E0DED4"></div>
<div class="nw" style="left:635.00px;top:247.04px;font-size:7.1px;line-height:10px;font-weight:normal;color:#111;letter-spacing:-0.150px;">Filters Bar</div>
<div style="left:768px;top:248.3px;width:8px;height:7.5px;background:linear-gradient(135deg,#6A9CF8,#2458D0);border-radius:1.5px"><div style="left:1.5px;top:1.5px;width:5px;height:4.5px;background:#B8D0FA;border-radius:0.5px"><div style="left:1.2px;top:1.6px;width:2.6px;height:1.5px;background:#2858C0"></div></div></div>
<div style="left:778.8px;top:248.5px;width:7px;height:7px"><svg width="7" height="7" viewBox="0 0 7 7"><path d="M1.8 0.8 L5.2 0.8 M2.3 0.8 L2.3 3.6 M4.7 0.8 L4.7 3.6 M0.6 4 L6.4 4" stroke="#3C4C7C" stroke-width="1.1" fill="none"/><rect x="2.3" y="0.8" width="2.4" height="3" fill="#6C80B8"/><path d="M3.5 4 L3.5 7" stroke="#3C4C7C" stroke-width="1"/></svg></div>
<div style="left:788px;top:248.3px;width:8px;height:7.5px;background:linear-gradient(135deg,#F49070,#D04C28);border-radius:1px"><svg style="position:absolute;left:0;top:0" width="8" height="8" viewBox="0 0 8 8"><path d="M2.2 2 L5.8 5.6 M5.8 2 L2.2 5.6" stroke="#fff" stroke-width="1.3"/></svg></div>
<div style="left:634.5px;top:259px;width:164px;height:123.5px;background:#ECE9DA;border:1px solid #A8ACB0;border-bottom:1px solid #C8C4B0"></div>
<div style="left:696.5px;top:260px;width:1px;height:122px;background:#B0AC98"></div>
<div style="left:635.5px;top:272.0px;width:162px;height:1px;background:repeating-linear-gradient(90deg,#D6D2C0 0 3px,transparent 3px 4px)"></div>
<div class="nw" style="left:645.00px;top:260.80px;font-size:7.5px;line-height:10px;font-weight:normal;color:#222;letter-spacing:-0.556px;">Completion</div>
<div class="ddb" style="left:786.6px;top:261.4px;width:9.4px;height:9.4px"><svg width="9.4" height="9.4" viewBox="0 0 9.4 9.4"><path d="M2.30 3.50 L4.70 5.90 L7.10 3.50" fill="none" stroke="#4A5880" stroke-width="1.3"/></svg></div>
<div style="left:635.5px;top:284.3px;width:162px;height:1px;background:repeating-linear-gradient(90deg,#D6D2C0 0 3px,transparent 3px 4px)"></div>
<div class="nw" style="left:644.00px;top:273.10px;font-size:7.5px;line-height:10px;font-weight:normal;color:#222;letter-spacing:-0.357px;">Due Date</div>
<div class="ddb" style="left:786.6px;top:273.7px;width:9.4px;height:9.4px"><svg width="9.4" height="9.4" viewBox="0 0 9.4 9.4"><path d="M2.30 3.50 L4.70 5.90 L7.10 3.50" fill="none" stroke="#4A5880" stroke-width="1.3"/></svg></div>
<div style="left:635.5px;top:296.6px;width:162px;height:1px;background:repeating-linear-gradient(90deg,#D6D2C0 0 3px,transparent 3px 4px)"></div>
<div class="nw" style="left:644.00px;top:285.40px;font-size:7.5px;line-height:10px;font-weight:normal;color:#222;letter-spacing:-0.480px;">Status</div>
<div class="ddb" style="left:786.6px;top:286.0px;width:9.4px;height:9.4px"><svg width="9.4" height="9.4" viewBox="0 0 9.4 9.4"><path d="M2.30 3.50 L4.70 5.90 L7.10 3.50" fill="none" stroke="#4A5880" stroke-width="1.3"/></svg></div>
<div style="left:635.5px;top:308.9px;width:162px;height:1px;background:repeating-linear-gradient(90deg,#D6D2C0 0 3px,transparent 3px 4px)"></div>
<div class="nw" style="left:644.00px;top:297.70px;font-size:7.5px;line-height:10px;font-weight:normal;color:#222;letter-spacing:-0.377px;">Priority</div>
<div class="ddb" style="left:786.6px;top:298.3px;width:9.4px;height:9.4px"><svg width="9.4" height="9.4" viewBox="0 0 9.4 9.4"><path d="M2.30 3.50 L4.70 5.90 L7.10 3.50" fill="none" stroke="#4A5880" stroke-width="1.3"/></svg></div>
<div style="left:635.5px;top:321.2px;width:162px;height:1px;background:repeating-linear-gradient(90deg,#D6D2C0 0 3px,transparent 3px 4px)"></div>
<div class="nw" style="left:645.00px;top:310.00px;font-size:7.5px;line-height:10px;font-weight:normal;color:#222;letter-spacing:-0.516px;">Assignments</div>
<div class="ddb" style="left:786.6px;top:310.6px;width:9.4px;height:9.4px"><svg width="9.4" height="9.4" viewBox="0 0 9.4 9.4"><path d="M2.30 3.50 L4.70 5.90 L7.10 3.50" fill="none" stroke="#4A5880" stroke-width="1.3"/></svg></div>
<div style="left:635.5px;top:333.5px;width:162px;height:1px;background:repeating-linear-gradient(90deg,#D6D2C0 0 3px,transparent 3px 4px)"></div>
<div class="nw" style="left:644.00px;top:322.30px;font-size:7.5px;line-height:10px;font-weight:normal;color:#222;letter-spacing:-0.540px;">Task Name</div>
<div style="left:635.5px;top:345.8px;width:162px;height:1px;background:repeating-linear-gradient(90deg,#D6D2C0 0 3px,transparent 3px 4px)"></div>
<div class="nw" style="left:644.00px;top:334.60px;font-size:7.5px;line-height:10px;font-weight:normal;color:#222;letter-spacing:-0.469px;">Date Created</div>
<div class="ddb" style="left:786.6px;top:335.2px;width:9.4px;height:9.4px"><svg width="9.4" height="9.4" viewBox="0 0 9.4 9.4"><path d="M2.30 3.50 L4.70 5.90 L7.10 3.50" fill="none" stroke="#4A5880" stroke-width="1.3"/></svg></div>
<div style="left:635.5px;top:358.1px;width:162px;height:1px;background:repeating-linear-gradient(90deg,#D6D2C0 0 3px,transparent 3px 4px)"></div>
<div style="left:644px;top:346.1px;width:52px;height:12px;overflow:hidden">
<div class="nw" style="left:0.00px;top:0.80px;font-size:7.5px;line-height:10px;font-weight:normal;color:#222;letter-spacing:-0.427px;">Date Last Modific</div>
</div>
<div class="ddb" style="left:786.6px;top:347.5px;width:9.4px;height:9.4px"><svg width="9.4" height="9.4" viewBox="0 0 9.4 9.4"><path d="M2.30 3.50 L4.70 5.90 L7.10 3.50" fill="none" stroke="#4A5880" stroke-width="1.3"/></svg></div>
<div style="left:635.5px;top:370.4px;width:162px;height:1px;background:repeating-linear-gradient(90deg,#D6D2C0 0 3px,transparent 3px 4px)"></div>
<div class="nw" style="left:644.00px;top:359.20px;font-size:7.5px;line-height:10px;font-weight:normal;color:#222;letter-spacing:-0.516px;">Date Opened</div>
<div class="ddb" style="left:786.6px;top:359.8px;width:9.4px;height:9.4px"><svg width="9.4" height="9.4" viewBox="0 0 9.4 9.4"><path d="M2.30 3.50 L4.70 5.90 L7.10 3.50" fill="none" stroke="#4A5880" stroke-width="1.3"/></svg></div>
<div style="left:635.5px;top:382.7px;width:162px;height:1px;background:repeating-linear-gradient(90deg,#D6D2C0 0 3px,transparent 3px 4px)"></div>
<div class="nw" style="left:644.00px;top:371.50px;font-size:7.5px;line-height:10px;font-weight:normal;color:#222;letter-spacing:-0.408px;">Date Completed</div>
<div class="ddb" style="left:786.6px;top:372.1px;width:9.4px;height:9.4px"><svg width="9.4" height="9.4" viewBox="0 0 9.4 9.4"><path d="M2.30 3.50 L4.70 5.90 L7.10 3.50" fill="none" stroke="#4A5880" stroke-width="1.3"/></svg></div>
<div style="left:634.5px;top:382.5px;width:164px;height:36.5px;background:#ECE9D8;border-left:1px solid #C0C8D0"></div>
<div style="left:634.5px;top:419px;width:164px;height:1px;background:#C8C4B4"></div>
<div style="left:634.5px;top:420px;width:164px;height:2.5px;background:#F4F3EE"></div>
<div style="left:634.5px;top:422.7px;width:163.5px;height:12.5px;background:linear-gradient(#FCFBF8,#F1EFE6);border-radius:2px;box-shadow:inset 0 0 0 0.5px #E0DED4"></div>
<div class="nw" style="left:635.00px;top:424.44px;font-size:7.1px;line-height:10px;font-weight:normal;color:#111;letter-spacing:-0.241px;">Resource Assignment Bar</div>
<div style="left:768px;top:425.7px;width:8px;height:7.5px;background:linear-gradient(135deg,#6A9CF8,#2458D0);border-radius:1.5px"><div style="left:1.5px;top:1.5px;width:5px;height:4.5px;background:#B8D0FA;border-radius:0.5px"><div style="left:1.2px;top:1.6px;width:2.6px;height:1.5px;background:#2858C0"></div></div></div>
<div style="left:778.8px;top:425.9px;width:7px;height:7px"><svg width="7" height="7" viewBox="0 0 7 7"><path d="M1.8 0.8 L5.2 0.8 M2.3 0.8 L2.3 3.6 M4.7 0.8 L4.7 3.6 M0.6 4 L6.4 4" stroke="#3C4C7C" stroke-width="1.1" fill="none"/><rect x="2.3" y="0.8" width="2.4" height="3" fill="#6C80B8"/><path d="M3.5 4 L3.5 7" stroke="#3C4C7C" stroke-width="1"/></svg></div>
<div style="left:788px;top:425.7px;width:8px;height:7.5px;background:linear-gradient(135deg,#F49070,#D04C28);border-radius:1px"><svg style="position:absolute;left:0;top:0" width="8" height="8" viewBox="0 0 8 8"><path d="M2.2 2 L5.8 5.6 M5.8 2 L2.2 5.6" stroke="#fff" stroke-width="1.3"/></svg></div>
<div style="left:634.5px;top:436px;width:164px;height:151px;background:#fff;border:1px solid #A8B4C0"></div>
<div style="left:635.5px;top:457.3px;width:162px;height:10px;background:#ECE9D8"></div>
<div style="left:636px;top:438px;width:8.5px;height:8px;border:1px solid #5E7088;background:linear-gradient(135deg,#DCDCD4,#FAFAF8)"></div>
<div class="nw" style="left:647.00px;top:437.51px;font-size:7.2px;line-height:10px;font-weight:normal;color:#111;letter-spacing:-0.278px;">Employee 1</div>
<div style="left:636px;top:448px;width:8.5px;height:8px;border:1px solid #5E7088;background:linear-gradient(135deg,#DCDCD4,#FAFAF8)"></div>
<div class="nw" style="left:647.00px;top:447.51px;font-size:7.2px;line-height:10px;font-weight:normal;color:#111;letter-spacing:-0.389px;">Employee 2</div>
<div style="left:636px;top:458px;width:8.5px;height:8px;border:1px solid #5E7088;background:linear-gradient(135deg,#DCDCD4,#FAFAF8)"></div>
<div style="left:637.3px;top:459.5px;width:7px;height:7px"><svg width="7" height="7" viewBox="0 0 7 7"><path d="M1 3.5 L2.8 5.5 L6 1.5" stroke="#21A121" stroke-width="1.4" fill="none"/></svg></div>
<div class="nw" style="left:648.50px;top:457.21px;font-size:7.2px;line-height:10px;font-weight:bold;color:#111;letter-spacing:0.167px;text-shadow:0.3px 0 0 #111;">HR Manager</div>
<div style="left:258px;top:194px;width:166.5px;height:277px;background:#FFFFFF;border:1px solid #BDBBB2;box-shadow:1.5px 1.5px 1px rgba(0,0,0,0.2)"></div>
<div style="left:260.5px;top:244px;width:163px;height:1px;background:#DEDCD2"></div>
<div style="left:260.5px;top:272.2px;width:163px;height:1px;background:#DEDCD2"></div>
<div style="left:260.5px;top:300.4px;width:163px;height:1px;background:#DEDCD2"></div>
<div style="left:260.5px;top:328.2px;width:163px;height:1px;background:#DEDCD2"></div>
<div style="left:260.5px;top:344.5px;width:163px;height:1px;background:#DEDCD2"></div>
<div style="left:260.5px;top:361.5px;width:163px;height:1px;background:#DEDCD2"></div>
<div style="left:260.5px;top:377.5px;width:163px;height:1px;background:#DEDCD2"></div>
<div style="left:260.5px;top:416.4px;width:163px;height:1px;background:#DEDCD2"></div>
<div style="left:260.5px;top:432.2px;width:163px;height:1px;background:#DEDCD2"></div>
<div style="left:259.5px;top:246.5px;width:12.5px;height:11.5px;background:#F4F3EE;border:1px solid #DAD8CE;border-radius:1px"></div>
<div style="left:272.5px;top:246.5px;width:151.5px;height:11.5px;background:#316AC5"></div>
<div style="left:261px;top:196.0px;width:10px;height:10px"><svg width="10" height="10" viewBox="0 0 10 10"><rect x="1" y="1" width="5" height="4" fill="#F0D070"/><rect x="1" y="4" width="6" height="6" fill="#E8ECF4" stroke="#90A0C0" stroke-width="0.6"/><circle cx="7.5" cy="7" r="2.2" fill="none" stroke="#E04848" stroke-width="0.9"/></svg></div>
<div class="nw" style="left:273.40px;top:196.80px;font-size:7.35px;line-height:10px;font-weight:normal;color:#111;letter-spacing:-0.290px;">Create Task</div>
<div class="nw" style="left:399.39px;top:196.80px;font-size:7.35px;line-height:10px;font-weight:normal;color:#111;letter-spacing:-0.320px;">Ins</div>
<div style="left:261px;top:207.45px;width:10px;height:10px"><svg width="10" height="10" viewBox="0 0 10 10"><rect x="0.5" y="2" width="7" height="8" fill="#E8F0FA" stroke="#8898B8" stroke-width="0.6"/><path d="M2.5 8.5 L9 1.5" stroke="#505A80" stroke-width="1.6"/><circle cx="9.2" cy="1.2" r="0.9" fill="#E05030"/></svg></div>
<div class="nw" style="left:272.40px;top:208.25px;font-size:7.35px;line-height:10px;font-weight:normal;color:#111;letter-spacing:-0.137px;">Edit Task</div>
<div class="nw" style="left:400.31px;top:208.25px;font-size:7.35px;line-height:10px;font-weight:normal;color:#111;letter-spacing:-0.560px;">F4</div>
<div style="left:261px;top:219.25px;width:10px;height:10px"><svg width="10" height="10" viewBox="0 0 10 10"><path d="M0.5 2 L3.5 0.5 L4.5 3.5 Z" fill="#6A90C8"/><path d="M4.5 1.5 L8 3.5 L4.5 5.5 Z" fill="#40A040"/><ellipse cx="6" cy="7.2" rx="3.2" ry="2.6" fill="#A8D4F4" stroke="#6898C8" stroke-width="0.6"/></svg></div>
<div class="nw" style="left:272.40px;top:220.05px;font-size:7.35px;line-height:10px;font-weight:normal;color:#111;letter-spacing:-0.154px;">Delete Task(s)</div>
<div class="nw" style="left:272.40px;top:231.80px;font-size:7.35px;line-height:10px;font-weight:normal;color:#111;letter-spacing:-0.231px;">Duplicate Task</div>
<div class="nw" style="left:388.43px;top:231.80px;font-size:7.35px;line-height:10px;font-weight:normal;color:#111;letter-spacing:-0.336px;">Ctrl+D</div>
<div style="left:261px;top:247.25px;width:10px;height:10px"><svg width="10" height="10" viewBox="0 0 10 10"><rect x="1" y="1" width="5" height="6" fill="#E0E8F8" stroke="#90A0C8" stroke-width="0.6"/><rect x="4" y="3.5" width="5.5" height="6" fill="#D0DCF4" stroke="#8090C0" stroke-width="0.6"/></svg></div>
<div class="nw" style="left:273.40px;top:248.05px;font-size:7.35px;line-height:10px;font-weight:normal;color:#fff;letter-spacing:-0.456px;">Copy Tasks</div>
<div class="nw" style="left:389.35px;top:248.05px;font-size:7.35px;line-height:10px;font-weight:normal;color:#fff;letter-spacing:-0.320px;">Ctrl+C</div>
<div style="left:261px;top:259.25px;width:10px;height:10px"><svg width="10" height="10" viewBox="0 0 10 10"><rect x="0.5" y="1" width="6" height="8" rx="1" fill="#E8B868" stroke="#B88840" stroke-width="0.6"/><rect x="3.5" y="3.5" width="6" height="6.5" fill="#E0E8F8" stroke="#8090C0" stroke-width="0.6"/></svg></div>
<div class="nw" style="left:272.40px;top:260.05px;font-size:7.35px;line-height:10px;font-weight:normal;color:#111;letter-spacing:-0.240px;">Paste Tasks</div>
<div class="nw" style="left:388.43px;top:260.05px;font-size:7.35px;line-height:10px;font-weight:normal;color:#111;letter-spacing:-0.336px;">Ctrl+V</div>
<div style="left:261px;top:274.75px;width:10px;height:10px"><svg width="10" height="10" viewBox="0 0 10 10"><defs><linearGradient id="bg1" x1="0" y1="0" x2="0" y2="1"><stop offset="0" stop-color="#8CC0F4"/><stop offset="0.5" stop-color="#4C90E0"/><stop offset="1" stop-color="#2E6CC4"/></linearGradient></defs><rect x="1" y="1" width="8.5" height="8.5" rx="1.2" fill="url(#bg1)" stroke="#3A70B8" stroke-width="0.5"/><path d="M2.8 6 L5 3.8 L7.2 6" fill="none" stroke="#fff" stroke-width="1.3"/></svg></div>
<div class="nw" style="left:272.40px;top:275.55px;font-size:7.35px;line-height:10px;font-weight:normal;color:#111;letter-spacing:-0.309px;">Task Move Up</div>
<div class="nw" style="left:384.75px;top:275.55px;font-size:7.35px;line-height:10px;font-weight:normal;color:#111;letter-spacing:-0.333px;">Ctrl+Up</div>
<div style="left:261px;top:286.65px;width:10px;height:10px"><svg width="10" height="10" viewBox="0 0 10 10"><rect x="0.5" y="0.5" width="9" height="9" rx="1.5" fill="#D4D4D4" stroke="#C0C0C0" stroke-width="0.6"/><path d="M2.8 4 L5 6.2 L7.2 4" fill="none" stroke="#fff" stroke-width="1.3"/></svg></div>
<div class="nw" style="left:272.40px;top:287.45px;font-size:7.35px;line-height:10px;font-weight:normal;color:#A8A8A0;letter-spacing:-0.362px;">Task Move Down</div>
<div class="nw" style="left:376.47px;top:287.45px;font-size:7.35px;line-height:10px;font-weight:normal;color:#A8A8A0;letter-spacing:-0.340px;">Ctrl+Down</div>
<div style="left:261px;top:302.85px;width:10px;height:10px"><svg width="10" height="10" viewBox="0 0 10 10"><defs><linearGradient id="bg1" x1="0" y1="0" x2="0" y2="1"><stop offset="0" stop-color="#8CC0F4"/><stop offset="0.5" stop-color="#4C90E0"/><stop offset="1" stop-color="#2E6CC4"/></linearGradient></defs><rect x="1" y="1" width="8.5" height="8.5" rx="1.2" fill="url(#bg1)" stroke="#3A70B8" stroke-width="0.5"/><path d="M3 4.5 L5 2.5 L7 4.5 M3 7 L5 5 L7 7" fill="none" stroke="#fff" stroke-width="1"/></svg></div>
<div class="nw" style="left:272.40px;top:303.65px;font-size:7.35px;line-height:10px;font-weight:normal;color:#111;letter-spacing:-0.169px;">Increase Priority</div>
<div class="nw" style="left:367.19px;top:303.65px;font-size:7.35px;line-height:10px;font-weight:normal;color:#111;letter-spacing:-0.287px;">Shift+Ctrl+Up</div>
<div style="left:261px;top:314.75px;width:10px;height:10px"><svg width="10" height="10" viewBox="0 0 10 10"><defs><linearGradient id="bg1" x1="0" y1="0" x2="0" y2="1"><stop offset="0" stop-color="#8CC0F4"/><stop offset="0.5" stop-color="#4C90E0"/><stop offset="1" stop-color="#2E6CC4"/></linearGradient></defs><rect x="1" y="1" width="8.5" height="8.5" rx="1.2" fill="url(#bg1)" stroke="#3A70B8" stroke-width="0.5"/><path d="M3 3 L5 5 L7 3 M3 5.5 L5 7.5 L7 5.5" fill="none" stroke="#fff" stroke-width="1"/></svg></div>
<div class="nw" style="left:272.40px;top:315.55px;font-size:7.35px;line-height:10px;font-weight:normal;color:#111;letter-spacing:-0.256px;">Decrease Priority</div>
<div class="nw" style="left:358.91px;top:315.55px;font-size:7.35px;line-height:10px;font-weight:normal;color:#111;letter-spacing:-0.297px;">Shift+Ctrl+Down</div>
<div style="left:261px;top:348.05px;width:10px;height:10px"><svg width="10" height="10" viewBox="0 0 10 10"><path d="M0.5 4 L5 1 L9.5 4 L9.5 9 L0.5 9 Z" fill="#F4F4F8" stroke="#98A0B8" stroke-width="0.6"/><path d="M1 4 L5 6.5 L9 4" fill="none" stroke="#98A0B8" stroke-width="0.6"/><path d="M5 9 L10 9" stroke="#3070D0" stroke-width="1.4"/><rect x="1" y="2.5" width="3" height="2" fill="#F0C060"/></svg></div>
<div class="nw" style="left:272.40px;top:348.85px;font-size:7.35px;line-height:10px;font-weight:normal;color:#111;letter-spacing:-0.300px;">Send task to assigned resource</div>
<div class="nw" style="left:392.11px;top:348.85px;font-size:7.35px;line-height:10px;font-weight:normal;color:#111;letter-spacing:-0.272px;">Ctrl+I</div>
<div style="left:261px;top:364.05px;width:10px;height:10px"><svg width="10" height="10" viewBox="0 0 10 10"><path d="M1 1.5 L4 1.5 L4 4 L1 4 M1 6 L4 6 L4 8.5 L1 8.5 M4 5 L9.5 5 M6 3.5 L9.5 3.5 M6 6.5 L9.5 6.5" stroke="#B0B0B0" stroke-width="0.7" fill="none"/></svg></div>
<div class="nw" style="left:272.40px;top:364.85px;font-size:7.35px;line-height:10px;font-weight:normal;color:#A8A8A0;letter-spacing:-0.275px;">Paste New Task(s)</div>
<div class="nw" style="left:273.40px;top:382.35px;font-size:7.35px;line-height:10px;font-weight:normal;color:#111;letter-spacing:-0.383px;">Change Status</div>
<div style="left:417px;top:384.1px;width:0;height:0;border-top:2.5px solid transparent;border-bottom:2.5px solid transparent;border-left:3px solid #000"></div>
<div class="nw" style="left:273.40px;top:393.35px;font-size:7.35px;line-height:10px;font-weight:normal;color:#111;letter-spacing:-0.421px;">Change Category</div>
<div style="left:417px;top:395.1px;width:0;height:0;border-top:2.5px solid transparent;border-bottom:2.5px solid transparent;border-left:3px solid #000"></div>
<div class="nw" style="left:272.40px;top:420.55px;font-size:7.35px;line-height:10px;font-weight:normal;color:#111;letter-spacing:-0.180px;">Export</div>
<div style="left:417px;top:422.2px;width:0;height:0;border-top:2.5px solid transparent;border-bottom:2.5px solid transparent;border-left:3px solid #000"></div>
<div class="nw" style="left:273.40px;top:436.35px;font-size:7.35px;line-height:10px;font-weight:normal;color:#111;letter-spacing:-0.350px;">Always Expand</div>
<div class="nw" style="left:272.40px;top:448.05px;font-size:7.35px;line-height:10px;font-weight:normal;color:#A8A8A0;letter-spacing:-0.178px;">Expand All</div>
<div class="nw" style="left:377.39px;top:448.05px;font-size:7.35px;line-height:10px;font-weight:normal;color:#A8A8A0;letter-spacing:-0.293px;">Ctrl+Alt+E</div>
<div class="nw" style="left:273.40px;top:460.05px;font-size:7.35px;line-height:10px;font-weight:normal;color:#A8A8A0;letter-spacing:-0.427px;">Collapse All</div>
<div class="nw" style="left:377.39px;top:460.05px;font-size:7.35px;line-height:10px;font-weight:normal;color:#A8A8A0;letter-spacing:-0.293px;">Ctrl+Alt+C</div>
<div class="nw" style="left:262.00px;top:332.65px;font-size:7.35px;line-height:10px;font-weight:normal;color:#A8A8A0;letter-spacing:-0.246px;">Filter Presets</div>
<div style="left:305.5px;top:331.2px;width:118px;height:11.6px;background:#ECEBE4;border:1px solid #B8C4D0"></div>
<div class="nw" style="left:307.00px;top:332.65px;font-size:7.35px;line-height:10px;font-weight:normal;color:#A8A8A0;letter-spacing:-0.400px;">Custom</div>
<div style="left:414px;top:334px"><svg style="position:absolute;left:0;top:0" width="7" height="6" viewBox="0 0 7 6"><path d="M1 1.5 L3.5 4 L6 1.5" fill="none" stroke="#B0B0B0" stroke-width="1.2"/></svg></div>
<div class="nw" style="left:262.00px;top:403.65px;font-size:7.35px;line-height:10px;font-weight:normal;color:#111;letter-spacing:-0.257px;">Set Due Date for selected tasks</div>
<div style="left:361px;top:402.4px;width:61.7px;height:11.6px;background:#fff;border:1px solid #7F9DB9"></div>
<div class="nw" style="left:361.70px;top:403.85px;font-size:7.35px;line-height:10px;font-weight:normal;color:#111;letter-spacing:-0.231px;">Sun 04/01/2009</div>
<div class="ddb" style="left:414.5px;top:403.4px;width:7.7px;height:9.6px"><svg width="7.7" height="9.6" viewBox="0 0 7.7 9.6"><path d="M1.45 3.60 L3.85 6.00 L6.25 3.60" fill="none" stroke="#4A5880" stroke-width="1.3"/></svg></div>
<div style="left:259.8px;top:434.2px;width:12px;height:12.2px;border:1px solid #C4D0DC;border-radius:2px;background:#FCFDFE"></div>
<div style="left:262.5px;top:437.5px;width:7px;height:6px"><svg width="7" height="6" viewBox="0 0 7 6"><path d="M0.8 3.2 L2.6 4.8 L6 1.5" stroke="#222" stroke-width="1.1" fill="none"/></svg></div>
</body></html>
